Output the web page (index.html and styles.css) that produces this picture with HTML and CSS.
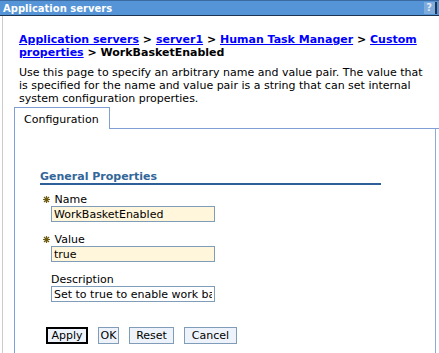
FILE: index.html
```html
<!DOCTYPE html>
<html>
<head>
    <title>Application servers</title>
    <link rel="stylesheet" href="styles.css">
</head>
<body>
    <div class="titlebar">
        <span class="title">Application servers</span>
        <span class="help">?</span>
    </div>

    <div class="page">
        <div class="crumbs">
            <a href="#">Application servers</a> &gt; <a href="#">server1</a> &gt; <a href="#">Human Task Manager</a> &gt; <a href="#">Custom properties</a> &gt; <b>WorkBasketEnabled</b>
        </div>

        <p class="intro">Use this page to specify an arbitrary name and value pair. The value that is specified for the name and value pair is a string that can set internal system configuration properties.</p>

        <div class="tabs">
            <div class="tab">Configuration</div>
            <div class="tab-fill"></div>
        </div>

        <div class="panel">
            <h3 class="section">General Properties</h3>

            <div class="field">
                <label class="req">
                    <svg class="star" width="7" height="7" viewBox="0 0 7 7"><path d="M3.5 0V7M0 3.5H7M1 1L6 6M6 1L1 6" stroke="#6e5c12" stroke-width="1.2"/></svg>
                    Name
                </label>
                <input type="text" class="req-input" value="WorkBasketEnabled">
            </div>

            <div class="field">
                <label class="req">
                    <svg class="star" width="7" height="7" viewBox="0 0 7 7"><path d="M3.5 0V7M0 3.5H7M1 1L6 6M6 1L1 6" stroke="#6e5c12" stroke-width="1.2"/></svg>
                    Value
                </label>
                <input type="text" class="req-input" value="true">
            </div>

            <div class="field">
                <label>Description</label>
                <input type="text" value="Set to true to enable work basket functionality">
            </div>

            <!-- buttons -->
            <div class="buttons">
                <button type="button" class="btn btn-apply">Apply</button>
                <button type="button" class="btn btn-ok">OK</button>
                <button type="button" class="btn btn-reset">Reset</button>
                <button type="button" class="btn btn-cancel">Cancel</button>
            </div>
        </div>
    </div>
</body>
</html>
```

FILE: styles.css
```css
* {
    box-sizing: border-box;
}

body {
    margin: 0;
    height: 100vh;
    overflow: hidden;
    display: flex;
    flex-direction: column;
    font-family: "DejaVu Sans", Verdana, sans-serif;
    font-size: 11px;
    color: #000000;
    background-color: #ffffff;
}

.titlebar {
    display: flex;
    justify-content: space-between;
    align-items: center;
    height: 16px;
    padding-left: 3px;
    background-color: #5594d6;
    border-top: 1px solid #3a6aa0;
    border-bottom: 1px solid #1d3550;
    color: #ffffff;
    font-weight: bold;
    font-size: 10px;
}

.help {
    width: 13px;
    height: 12px;
    line-height: 12px;
    margin-right: 2px;
    padding-right: 3px;
    text-align: right;
    background-color: #7eaadc;
    border-right: 2px solid #1d3550;
    color: #dfe9f6;
    font-size: 10px;
}

.page {
    flex: 1;
    display: flex;
    flex-direction: column;
    margin-left: 2px;
    border-left: 1px solid #cccccc;
    padding: 17px 0 0 11px;
}

.crumbs {
    width: 416px;
    padding-left: 5px;
    font-weight: bold;
    line-height: 13px;
}

.crumbs a {
    color: #0000ff;
}

.intro {
    width: 417px;
    margin: 7px 0 2px 0;
    padding-left: 5px;
    line-height: 13px;
}

.tabs {
    display: flex;
}

.tab {
    height: 22px;
    padding: 5px 10px 0 9px;
    border: 1px solid #7f9fd6;
    border-bottom: none;
    line-height: 13px;
}

.tab-fill {
    width: 330px;
    border-bottom: 1px solid #7f9fd6;
}

.panel {
    flex: 1;
    width: 422px;
    border-left: 1px solid #7f9fd6;
    border-right: 1px solid #8fa8d8;
    padding: 41px 0 0 25px;
}

.section {
    width: 341px;
    height: 15px;
    margin: 0 0 8px 0;
    border-bottom: 2px solid #2f5f98;
    color: #336699;
    font-size: 11px;
    line-height: 13px;
}

.field {
    display: flex;
    flex-direction: column;
    align-items: flex-start;
    margin-bottom: 11px;
}

.field label {
    padding-left: 11px;
    line-height: 13px;
}

.field label.req {
    padding-left: 3px;
}

.star {
    margin-right: 1px;
}

.field input {
    width: 164px;
    height: 16px;
    margin-left: 11px;
    padding: 0 2px;
    border: 1px solid #7f9db9;
    font-family: "DejaVu Sans", Verdana, sans-serif;
    font-size: 11px;
}

.field input.req-input {
    background-color: #fff6dc;
}

.buttons {
    display: flex;
    gap: 10px;
    margin-top: 25px;
    padding-left: 6px;
}

.btn {
    height: 17px;
    padding: 0;
    background-color: #eef3fb;
    border: 1px solid #7f9db9;
    font-family: "DejaVu Sans", Verdana, sans-serif;
    font-size: 11px;
    line-height: 13px;
}

.btn-apply {
    width: 42px;
    border: 2px solid #000000;
}

.btn-ok {
    width: 21px;
}

.btn-reset {
    width: 45px;
}

.btn-cancel {
    width: 53px;
}
```
